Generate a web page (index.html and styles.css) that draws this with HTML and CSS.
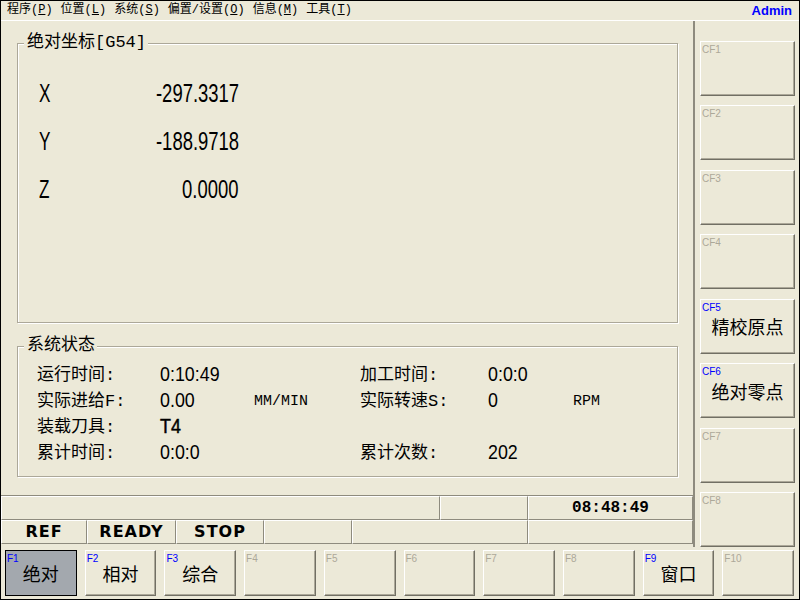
FILE: index.html
```html
<!DOCTYPE html>
<html lang="zh-CN">
<head>
<meta charset="utf-8">
<title>CNC</title>
<link rel="stylesheet" href="styles.css">
</head>
<body>
<div class="window">
  <div class="menubar">
    <span class="menu-item">程序(<u>P</u>)</span>
    <span class="menu-item">位置(<u>L</u>)</span>
    <span class="menu-item">系统(<u>S</u>)</span>
    <span class="menu-item">偏置/设置(<u>O</u>)</span>
    <span class="menu-item">信息(<u>M</u>)</span>
    <span class="menu-item">工具(<u>T</u>)</span>
    <span class="user">Admin</span>
  </div>
  <div class="main">
    <div class="left">
      <div class="content">
        <div class="group group-coords">
          <div class="group-title">绝对坐标[G54]</div>
          <div class="coords">
            <div class="axis"><span>X</span></div><div class="val"><span>-297.3317</span></div>
            <div class="axis"><span>Y</span></div><div class="val"><span>-188.9718</span></div>
            <div class="axis"><span>Z</span></div><div class="val"><span>0.0000</span></div>
          </div>
        </div>
        <div class="group group-status">
          <div class="group-title">系统状态</div>
          <div class="status-grid">
            <div class="lbl">运行时间:</div><div class="num"><span>0:10:49</span></div><div class="unit"></div>
            <div class="lbl">加工时间:</div><div class="num"><span>0:0:0</span></div><div class="unit"></div>

            <div class="lbl">实际进给F:</div><div class="num"><span>0.00</span></div><div class="unit">MM/MIN</div>
            <div class="lbl">实际转速S:</div><div class="num"><span>0</span></div><div class="unit">RPM</div>

            <div class="lbl">装载刀具:</div><div class="num heavy"><span>T4</span></div><div class="unit"></div>
            <div class="lbl"></div><div class="num"></div><div class="unit"></div>

            <div class="lbl">累计时间:</div><div class="num"><span>0:0:0</span></div><div class="unit"></div>
            <div class="lbl">累计次数:</div><div class="num"><span>202</span></div><div class="unit"></div>
          </div>
        </div>
      </div>
      <div class="statusbar">
        <div class="sb-row sb-row1">
          <div class="cell"></div>
          <div class="cell"></div>
          <div class="cell clock">08:48:49</div>
        </div>
        <div class="sb-row sb-row2">
          <div class="cell state">REF</div>
          <div class="cell state">READY</div>
          <div class="cell state">STOP</div>
          <div class="cell"></div>
          <div class="cell"></div>
          <div class="cell"></div>
        </div>
      </div>
    </div>
    <div class="side">
      <div class="btn"><span class="key">CF1</span></div>
      <div class="btn"><span class="key">CF2</span></div>
      <div class="btn"><span class="key">CF3</span></div>
      <div class="btn"><span class="key">CF4</span></div>
      <div class="btn"><span class="key on">CF5</span>精校原点</div>
      <div class="btn"><span class="key on">CF6</span>绝对零点</div>
      <div class="btn"><span class="key">CF7</span></div>
      <div class="btn"><span class="key">CF8</span></div>
    </div>
  </div>
  <div class="fkeys">
    <div class="btn active"><span class="key on">F1</span>绝对</div>
    <div class="btn"><span class="key on">F2</span>相对</div>
    <div class="btn"><span class="key on">F3</span>综合</div>
    <div class="btn"><span class="key">F4</span></div>
    <div class="btn"><span class="key">F5</span></div>
    <div class="btn"><span class="key">F6</span></div>
    <div class="btn"><span class="key">F7</span></div>
    <div class="btn"><span class="key">F8</span></div>
    <div class="btn"><span class="key on">F9</span>窗口</div>
    <div class="btn"><span class="key">F10</span></div>
  </div>
</div>
</body>
</html>
```

FILE: styles.css
```css
* { box-sizing: border-box; }
html, body { margin: 0; padding: 0; }
body {
  width: 800px;
  height: 600px;
  overflow: hidden;
  background: #ECE9D8;
  font-family: "Noto Sans CJK SC", sans-serif;
  color: #000;
}
.window {
  width: 800px;
  height: 600px;
  border: 1px solid #000;
  background: #ECE9D8;
  display: flex;
  flex-direction: column;
}

/* menu */
.menubar {
  flex: none;
  height: 20px;
  border-bottom: 1px solid #fff;
  display: flex;
  align-items: center;
  gap: 8px;
  padding: 0 7px 0 6px;
  font-family: "Liberation Mono", "Noto Sans CJK SC", monospace;
  font-size: 12px;
  line-height: 19px;
}
.menu-item u { text-decoration: underline; }
.user {
  margin-left: auto;
  color: #0000FF;
  font: bold 13px/19px "Liberation Sans", sans-serif;
}

/* main */
.main {
  flex: none;
  height: 526px;
  display: flex;
}
.left {
  width: 692px;
  display: flex;
  flex-direction: column;
}
.content {
  height: 474px;
  padding: 22px 15px 0 16px;
  display: flex;
  flex-direction: column;
  gap: 23px;
}
.group {
  border: 1px solid #ACA899;
  box-shadow: inset 1px 1px 0 #fff, 1px 1px 0 #fff;
}
.group-coords { height: 280px; }
.group-status { height: 131px; }
.group-title {
  width: fit-content;
  margin: -10px 0 0 6px;
  padding: 0 2px 0 3px;
  background: #ECE9D8;
  font-family: "Liberation Mono", "Noto Sans CJK SC", monospace;
  font-size: 17px;
  line-height: 18px;
}

.coords {
  display: grid;
  grid-template-columns: 60px 140px;
  grid-auto-rows: 48px;
  align-items: center;
  padding: 17px 0 0 21px;
  font-family: "Liberation Sans", sans-serif;
  font-size: 26px;
  line-height: 48px;
}
.axis span {
  display: inline-block;
  transform: scaleX(0.66);
  transform-origin: left center;
}
.val { text-align: right; }
.val span {
  display: inline-block;
  transform: scaleX(0.71);
  transform-origin: right center;
}

.status-grid {
  display: grid;
  grid-template-columns: 123px 94px 106px 128px 85px 1fr;
  grid-auto-rows: 26px;
  align-items: center;
  padding: 6px 0 0 19px;
}
.lbl {
  font-family: "Liberation Mono", "Noto Sans CJK SC", monospace;
  font-size: 17px;
  line-height: 23px;
  padding-top: 3px;
  white-space: nowrap;
}
.num {
  font-family: "Liberation Sans", sans-serif;
  font-size: 21px;
  line-height: 26px;
}
.num span {
  display: inline-block;
  transform: scaleX(0.85);
  transform-origin: left center;
}
.num.heavy span { -webkit-text-stroke: 0.5px #000; }
.unit {
  font-family: "Liberation Mono", monospace;
  font-size: 15px;
  line-height: 23px;
  padding-top: 3px;
}

/* status bar */
.statusbar {
  height: 52px;
  border-top: 1px solid #8E8B7E;
}
.sb-row { display: grid; height: 24px; }
.sb-row1 { grid-template-columns: 439px 88px 165px; }
.sb-row2 { grid-template-columns: 86px 89px 88px 88px 176px 165px; }
.cell {
  border: 1px solid;
  border-color: #fff #8E8B7E #8E8B7E #fff;
  display: flex;
  align-items: center;
  justify-content: center;
}
.clock {
  font: bold 16px/22px "Liberation Mono", monospace;
}
.state {
  font: bold 16px/22px "DejaVu Sans", sans-serif;
  letter-spacing: 1px;
}

/* side buttons */
.side {
  width: 106px;
  border-left: 2px solid #8E8B7E;
  padding: 20px 4px 0 5px;
  display: grid;
  grid-template-rows: repeat(8, 55px);
  row-gap: 9.43px;
}

.btn {
  position: relative;
  background: #ECE9D8;
  border: 1px solid;
  border-color: #fff #716F64 #716F64 #fff;
  box-shadow: inset -1px -1px 0 #ACA899;
  display: flex;
  align-items: center;
  justify-content: center;
  font-size: 18px;
  line-height: 24px;
}
.btn.active {
  background: #A3A8AE;
  border-color: #000;
  box-shadow: none;
}
.key {
  position: absolute;
  top: 2px;
  left: 1px;
  font: 10px/11px "Liberation Sans", sans-serif;
  color: #ACA899;
}
.key.on { color: #0000FF; }

/* function keys */
.fkeys {
  flex: none;
  height: 52px;
  display: flex;
  gap: 8px;
  padding: 3px 5px 3px 4px;
}
.fkeys .btn {
  flex: 1;
  height: 46px;
}
```
